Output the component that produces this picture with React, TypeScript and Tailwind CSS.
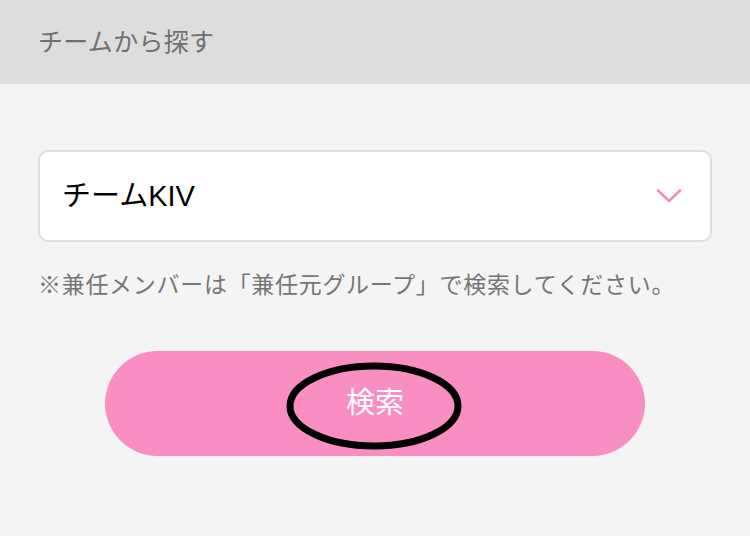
import React from "react";

const font = { fontFamily: '"Liberation Sans", "Noto Sans CJK JP", sans-serif' };

const Chevron = () => (
  <svg width="26" height="16" viewBox="0 0 26 16" fill="none" className="text-[#f78ac0]">
    <path d="M2 2.5 L13 13 L24 2.5" stroke="currentColor" strokeWidth="2.6" strokeLinecap="round" strokeLinejoin="round" />
  </svg>
);

export default function App() {
  return (
    <div className="w-[750px] h-[536px] bg-[#f4f4f4] flex flex-col" style={font}>
      <div className="h-[84px] bg-[#dddddd] flex items-center px-[38px]">
        <span className="text-[25px] text-[#707070] leading-none tracking-[0.3px]">チームから探す</span>
      </div>

      <div className="flex flex-col px-[38px] pt-[66px]">
        <div className="h-[92px] bg-white border-2 border-[#dedede] rounded-[10px] flex items-center justify-between pl-[22px] pr-[28px]">
          <span className="text-[29px] text-black leading-none">チームKIV</span>
          <Chevron />
        </div>

        <p className="mt-[32px] text-[23px] text-[#767676] leading-none tracking-[0.7px] whitespace-nowrap">
          ※兼任メンバーは「兼任元グループ」で検索してください。
        </p>

        <div className="mt-[54px] flex justify-center">
          <button className="relative w-[540px] h-[105px] rounded-full bg-[#f98ec2] flex items-center justify-center">
            <span className="text-[29px] text-white leading-none">検索</span>
            <svg
              className="absolute left-[180px] top-[10px]"
              width="178"
              height="92"
              viewBox="0 0 178 92"
              fill="none"
            >
              <ellipse cx="89" cy="45" rx="84" ry="40" stroke="black" strokeWidth="7" />
            </svg>
          </button>
        </div>
      </div>
    </div>
  );
}
